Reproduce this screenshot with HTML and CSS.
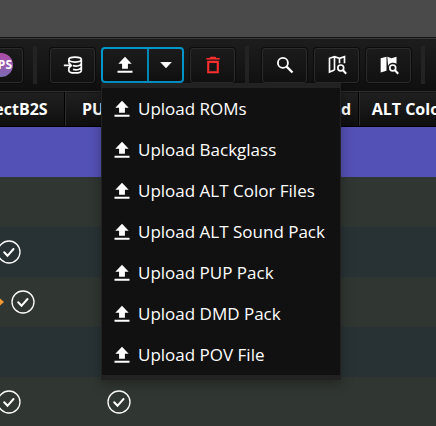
FILE: index.html
```html
<!DOCTYPE html>
<html lang="en">
<head>
<meta charset="utf-8">
<title>Tables</title>
<link rel="stylesheet" href="styles.css">
</head>
<body>
<svg class="defs" aria-hidden="true">
  <symbol id="upload" viewBox="0 0 24 24"><path d="M8.500 16.500v-6H4L12 2l8 8.500h-4.500v6zM3 19h18v2.400H3z"/></symbol>
  <symbol id="check" viewBox="0 0 24 24"><g fill="none" stroke="currentColor"><circle cx="12" cy="12" r="11" stroke-width="1.300"/><path d="M7.200 12.200l3.300 3.600 6-6.800" stroke-width="2" stroke-linecap="round"/></g></symbol>
</svg>
<div class="titlebar"></div>
<div class="toolbar" role="toolbar">
  <button class="tool" aria-label="PUPs">
    <svg class="badge" viewBox="0 0 24 24"><defs><linearGradient id="g" x1="0" y1="0" x2="0" y2="1"><stop offset="0" stop-color="#b04ba8"/><stop offset="1" stop-color="#7b6cb4"/></linearGradient></defs><circle cx="12" cy="12" r="12" fill="url(#g)"/><text class="badge-text" x="23" y="16" text-anchor="end">PS</text></svg>
  </button>
  <span class="sep"></span>
  <button class="tool" aria-label="Import">
    <svg class="icon line" viewBox="0 0 24 24"><ellipse cx="14.500" cy="5.500" rx="7.500" ry="3"/><path d="M7 5.500V9M22 5.500v13c0 4-15 4-15 0V16M22 10c0 3-6 4-10 2.800M22 14.500c0 3-6 4-10 2.800"/><path d="M1 12.500h9M6.500 9l3.500 3.500L6.500 16"/></svg>
  </button>
  <div class="split">
    <button class="split-main" aria-label="Upload"><svg class="icon"><use href="#upload"/></svg></button>
    <button class="split-arrow" aria-label="More uploads" aria-expanded="true"><svg class="icon" viewBox="0 0 24 24"><path d="M5 8.500h14l-7 7.500z"/></svg></button>
    <div class="menu" role="menu">
      <button class="item" role="menuitem"><svg class="icon"><use href="#upload"/></svg>Upload ROMs</button>
      <button class="item" role="menuitem"><svg class="icon"><use href="#upload"/></svg>Upload Backglass</button>
      <button class="item" role="menuitem"><svg class="icon"><use href="#upload"/></svg>Upload ALT Color Files</button>
      <button class="item" role="menuitem"><svg class="icon"><use href="#upload"/></svg>Upload ALT Sound Pack</button>
      <button class="item" role="menuitem"><svg class="icon"><use href="#upload"/></svg>Upload PUP Pack</button>
      <button class="item" role="menuitem"><svg class="icon"><use href="#upload"/></svg>Upload DMD Pack</button>
      <button class="item" role="menuitem"><svg class="icon"><use href="#upload"/></svg>Upload POV File</button>
    </div>
  </div>
  <button class="tool danger" aria-label="Delete">
    <svg class="icon" viewBox="0 0 24 24"><path d="M9 2h6l1 1.500h4v2H4v-2h4zM5 7h14v15H5zm2.500 2.500v10h9v-10z" fill-rule="evenodd"/></svg>
  </button>
  <span class="sep"></span>
  <button class="tool" aria-label="Search">
    <svg class="icon line" viewBox="0 0 24 24"><circle cx="9.500" cy="9.500" r="6" stroke-width="2.200"/><path d="M14 14l7 7" stroke-width="2.800"/></svg>
  </button>
  <button class="tool" aria-label="Scan">
    <svg class="icon line" viewBox="0 0 24 24"><path d="M9 18l-6 2.500V4l6-2 6 2 6-2v8M9 2v16M15 4v6"/><circle cx="16.500" cy="15.500" r="3.500"/><path d="M19 18l4 4.500" stroke-width="2.400"/></svg>
  </button>
  <button class="tool" aria-label="Scan all">
    <svg class="icon" viewBox="0 0 24 24"><path d="M2 4l7-2v17l-7 2zM10 2l5 2 6-2v8.500c-4-3-11 0-10 4z"/></svg>
    <svg class="icon line" viewBox="0 0 24 24"><circle class="gap" cx="16.500" cy="15.500" r="5"/><circle cx="16.500" cy="15.500" r="3.500"/><path d="M19 18l4 4.500" stroke-width="2.400"/></svg>
  </button>
  <span class="sep"></span>
</div>
<div class="table-wrap">
  <table>
    <colgroup><col class="c-b2s"><col class="c-pup"><col class="c-sound"><col class="c-color"></colgroup>
    <thead><tr><th>DirectB2S</th><th>PUP Pack</th><th class="end">ALT Sound</th><th>ALT Color</th></tr></thead>
    <tbody>
      <tr class="selected"><td></td><td></td><td></td><td></td></tr>
      <tr><td></td><td></td><td></td><td></td></tr>
      <tr><td><svg class="check"><use href="#check"/></svg></td><td></td><td></td><td></td></tr>
      <tr><td><span class="pair"><svg class="update" viewBox="0 0 24 24"><path d="M2 9h11V5l8 7-8 7v-4H2z"/></svg><svg class="check"><use href="#check"/></svg></span></td><td></td><td></td><td></td></tr>
      <tr><td></td><td></td><td></td><td></td></tr>
      <tr><td><svg class="check"><use href="#check"/></svg></td><td><svg class="check"><use href="#check"/></svg></td><td></td><td></td></tr>
    </tbody>
  </table>
</div>
</body>
</html>
```
FILE: styles.css
```css
* { box-sizing: border-box; }
body {
  margin: 0;
  min-height: 100vh;
  overflow: hidden;
  background: #303632;
  color: #fff;
  font: 17px/24px "Open Sans", "Noto Sans", sans-serif;
}
button { margin: 0; padding: 0; font: inherit; color: inherit; }
svg { display: block; fill: currentColor; }
.defs { position: absolute; width: 0; height: 0; }

.titlebar { height: 38px; background: #4a4a4a; border-bottom: 1px solid #151515; }

.toolbar {
  display: flex;
  align-items: center;
  gap: 7px;
  height: 53px;
  margin-left: -22px;
  background: linear-gradient(#1d1d1d, #0f0f0f);
  border-top: 1px solid #383838;
}
.tool {
  flex: none;
  display: grid;
  place-items: center;
  width: 45px;
  height: 35px;
  border: 1px solid #2b2b2b;
  border-radius: 3px;
  background: linear-gradient(#1b1b1b, #111);
  box-shadow: 0 0 0 1px #0c0c0c;
}
.tool > svg { grid-area: 1 / 1; }
.icon { flex: none; width: 20px; height: 20px; }
.line { fill: none; stroke: currentColor; stroke-width: 2; }
.gap { fill: #161616; stroke: none; }
.danger { color: #ff2d2d; }
.badge { width: 24px; height: 24px; }
.badge-text { font: bold 12px "Open Sans", sans-serif; fill: #fff; }
.sep { flex: none; width: 4px; height: 38px; margin: 0 6px 0 3px; background: #232323; }

.split {
  position: relative;
  flex: none;
  display: flex;
  height: 36px;
  margin: 0 -1px;
  border: 2px solid #0096c9;
  border-radius: 4px;
  background: linear-gradient(#1b1b1b, #111);
}
.split-main, .split-arrow { display: grid; place-items: center; border: 0; background: none; }
.split-main { width: 44px; }
.split-arrow { width: 35px; border-left: 2px solid #0087b5; }

.menu {
  position: absolute;
  z-index: 1;
  top: 34px;
  left: -2px;
  width: 240px;
  border: solid #222;
  border-width: 5px 1px;
  background: #111;
  box-shadow: 0 4px 12px rgba(0, 0, 0, 0.3);
}
.item {
  display: flex;
  align-items: center;
  gap: 6px;
  width: 100%;
  height: 41px;
  padding-left: 10px;
  border: 0;
  background: none;
  white-space: nowrap;
}

.table-wrap { overflow: hidden; }
table {
  width: calc(100% + 72px);
  margin-left: -48px;
  table-layout: fixed;
  border-collapse: collapse;
}
.c-b2s { width: 113px; }
.c-pup { width: 107px; }
.c-sound { width: 187px; }
th {
  height: 35px;
  padding: 0 8px;
  overflow: hidden;
  border: 1px solid #2c2c2c;
  border-bottom-color: #000;
  background: linear-gradient(#202020, #0e0e0e);
  box-shadow: inset -1px 0 #000;
  font-size: 16px;
  line-height: 24px;
  text-align: center;
  white-space: nowrap;
}
th.end { text-align: right; }
td { height: 50px; padding: 0; }
tbody tr { background: #303632; }
tbody tr:nth-child(odd) { background: #283234; }
tbody tr.selected { background: #5451b6; }
.check { width: 24px; height: 24px; margin: 0 auto; }
.pair { display: flex; justify-content: center; gap: 4px; }
.pair .check { margin: 0; }
.update { width: 24px; height: 24px; color: #ff9933; }
```
